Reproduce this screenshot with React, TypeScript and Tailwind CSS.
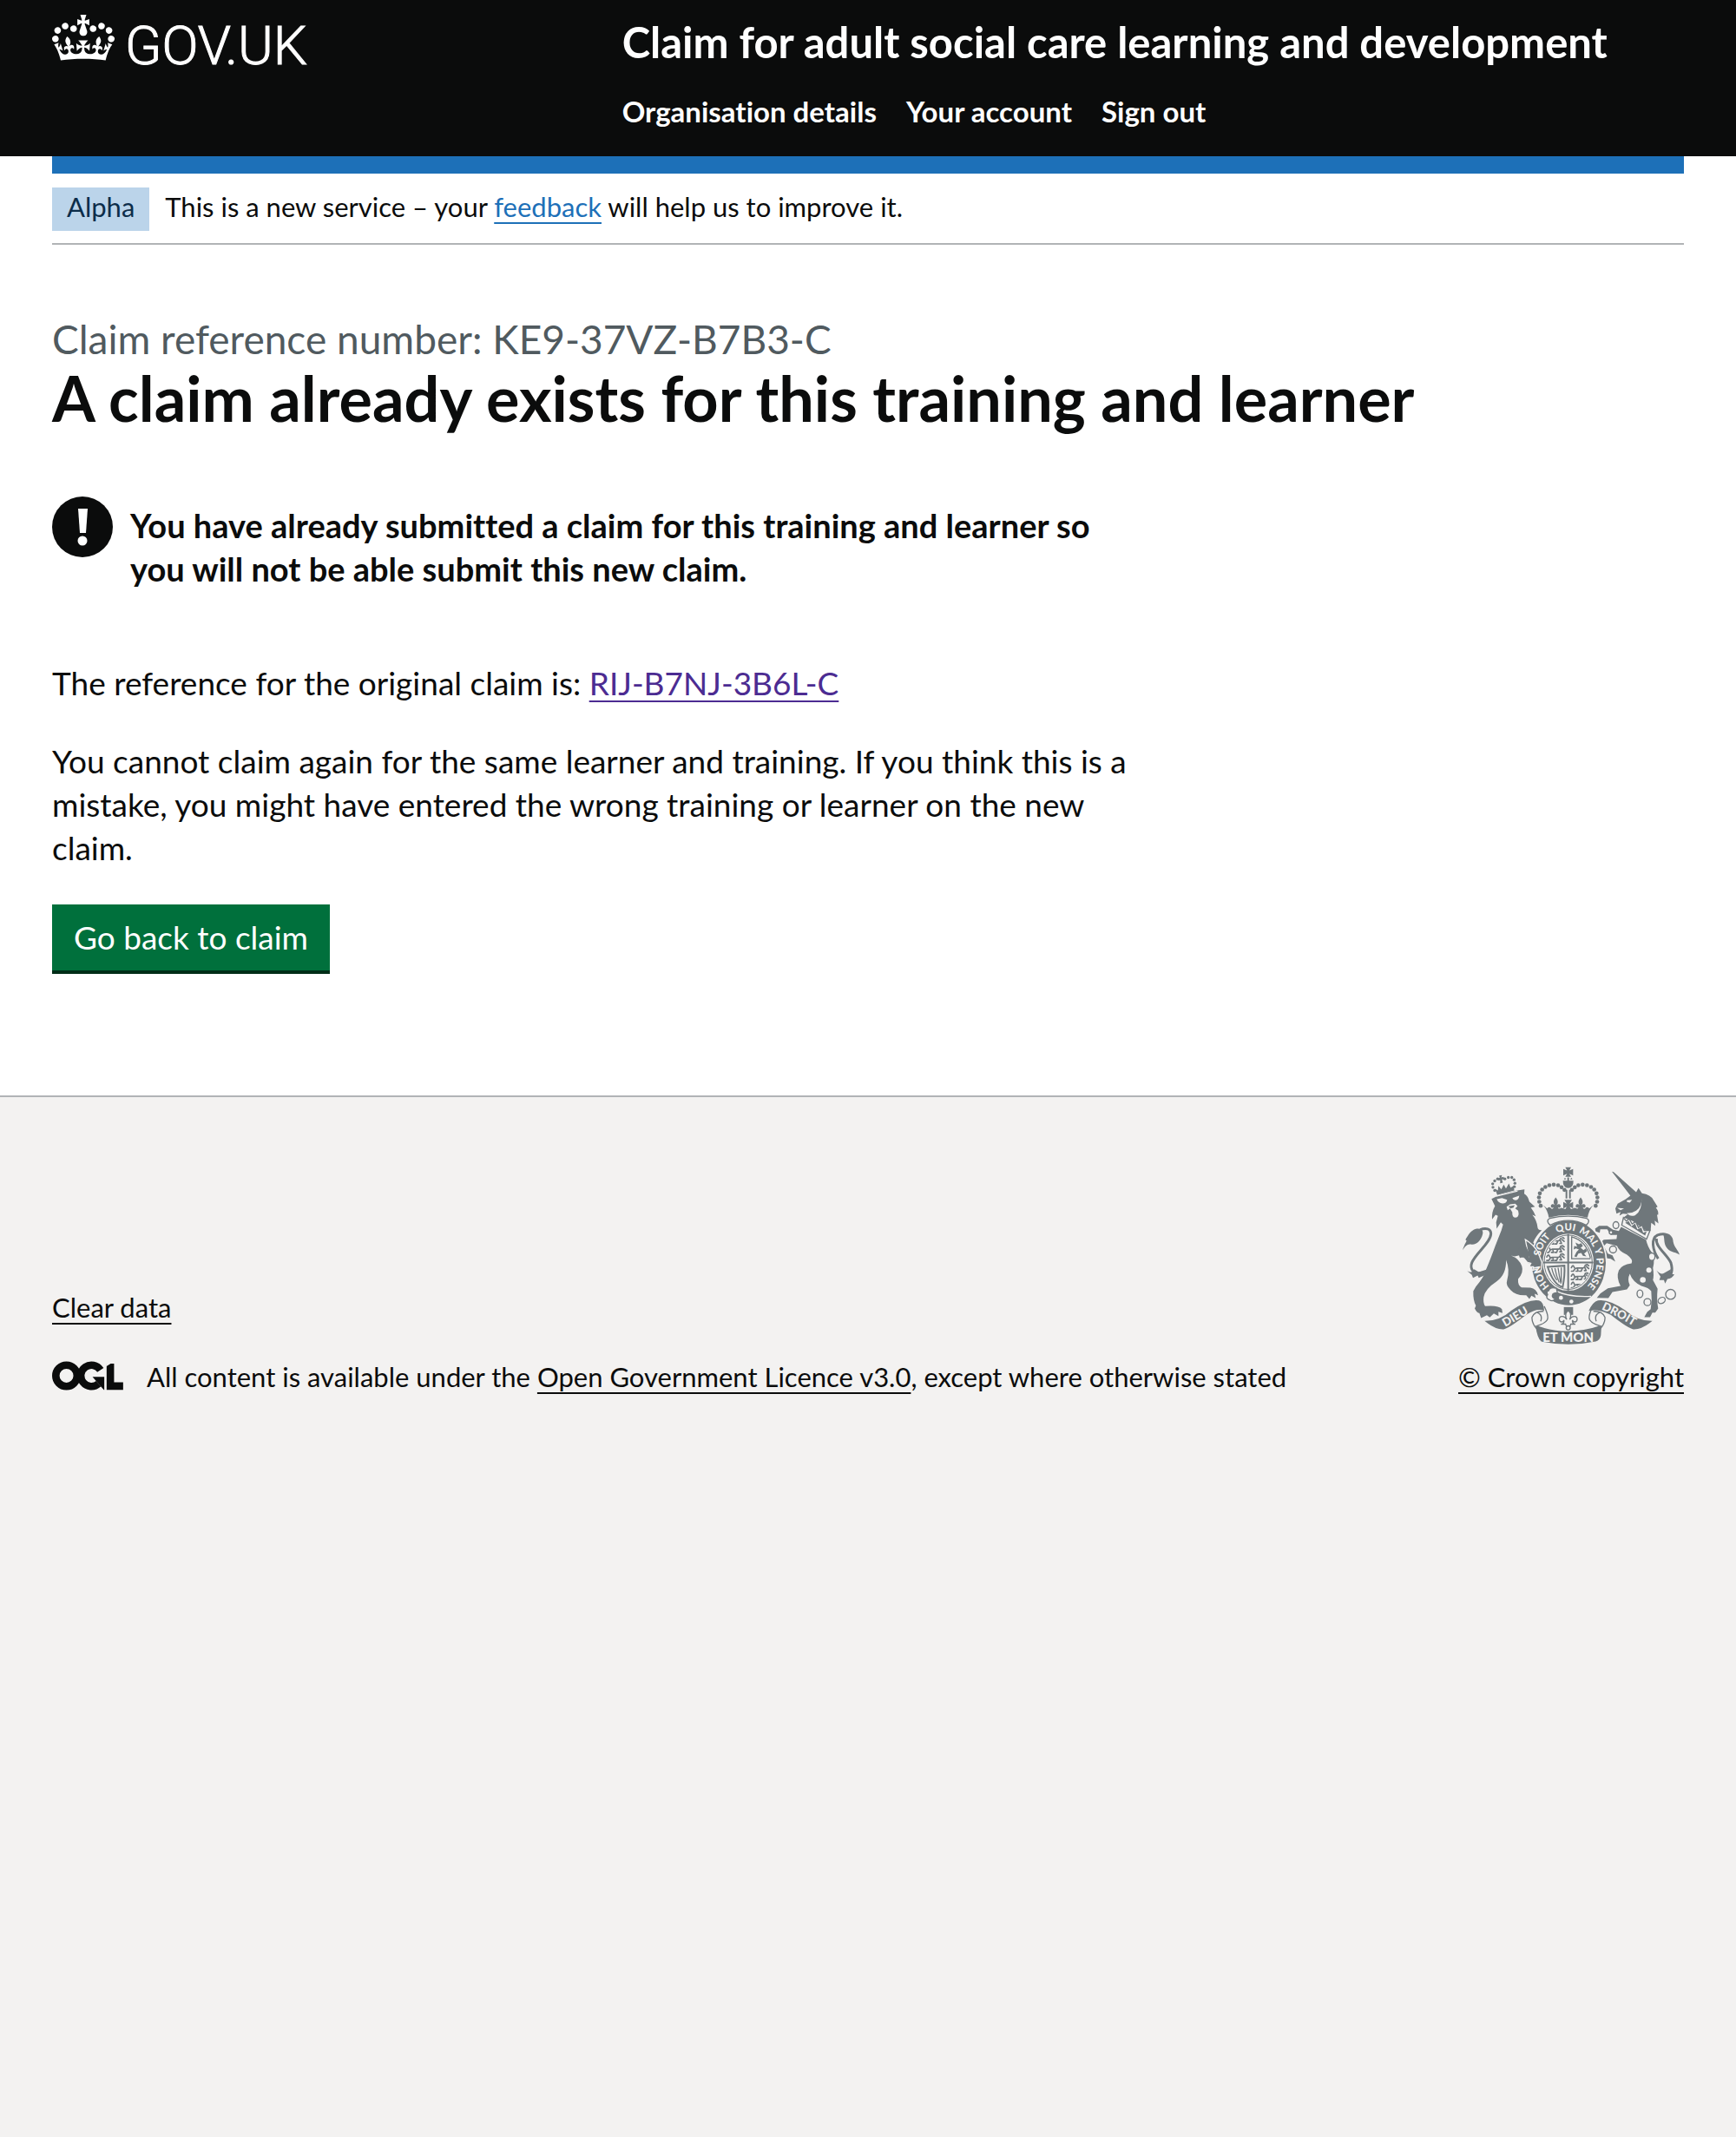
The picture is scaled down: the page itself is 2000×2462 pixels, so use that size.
import React from 'react';

const LINK =
  'underline decoration-2 underline-offset-[6px] [text-decoration-skip-ink:none]';

function Crown() {
  return (
    <svg aria-hidden="true" viewBox="0 0 132 97" className="mt-px h-[53px] w-[72px] shrink-0" fill="currentColor">
      <path d="M25 30.2c3.5 1.5 7.7-.2 9.1-3.7 1.5-3.6-.2-7.8-3.9-9.2-3.6-1.4-7.6.3-9.1 3.9-1.4 3.5.3 7.5 3.9 9zM9 39.5c3.6 1.5 7.8-.2 9.2-3.7 1.5-3.6-.2-7.8-3.9-9.1-3.6-1.5-7.6.2-9.1 3.8-1.4 3.5.3 7.5 3.8 9zM4.4 57.2c3.5 1.5 7.7-.2 9.1-3.8 1.5-3.6-.2-7.7-3.9-9.1-3.5-1.5-7.6.3-9.1 3.8-1.4 3.5.3 7.6 3.9 9.1zm38.3-21.4c3.5 1.5 7.7-.2 9.1-3.8 1.5-3.6-.2-7.7-3.9-9.1-3.6-1.5-7.6.3-9.1 3.8-1.3 3.6.4 7.7 3.9 9.1zm64.4-5.6c-3.6 1.5-7.8-.2-9.1-3.7-1.5-3.6.2-7.8 3.8-9.2 3.6-1.4 7.7.3 9.2 3.9 1.3 3.5-.4 7.5-3.9 9zm15.9 9.3c-3.6 1.5-7.7-.2-9.1-3.7-1.5-3.6.2-7.8 3.7-9.1 3.6-1.5 7.7.2 9.2 3.8 1.5 3.5-.3 7.5-3.8 9zm4.7 17.7c-3.6 1.5-7.8-.2-9.2-3.8-1.5-3.6.2-7.7 3.9-9.1 3.6-1.5 7.7.3 9.2 3.8 1.3 3.5-.4 7.6-3.9 9.1zM89.3 35.8c-3.6 1.5-7.8-.2-9.2-3.8-1.4-3.6.2-7.7 3.9-9.1 3.6-1.5 7.7.3 9.2 3.8 1.4 3.6-.3 7.7-3.9 9.1zM69.7 17.7l8.9 4.7V9.3l-8.9 2.8c-.2-.3-.5-.6-.9-.9L72.4 0H59.6l3.5 11.2c-.3.3-.6.5-.9.9l-8.8-2.8v13.1l8.8-4.7c.3.3.6.7.9.9l-5 15.4v.1c-.2.8-.4 1.6-.4 2.4 0 4.1 3.1 7.5 7 8.1h.2c.3 0 .7.1 1 .1.4 0 .7 0 1-.1h.2c4-.6 7.1-4.1 7.1-8.1 0-.8-.1-1.7-.4-2.4V34l-5.1-15.4c.4-.2.7-.6 1-.9zM66 92.8c16.9 0 32.8 1.1 47.1 3.2 4-16.9 8.9-26.7 14-33.5l-9.6-3.4c1 4.9 1.1 7.2 0 10.2-1.5-1.4-3-4.3-4.2-8.7L108.6 76c2.8-2 5-3.2 7.5-3.3-4.4 9.4-10 11.9-13.6 11.2-4.3-.8-6.3-4.6-5.6-7.9 1-4.7 5.7-5.9 8-.5 4.3-8.7-3-11.4-7.6-8.8 7.1-7.2 7.9-13.5 2.1-21.1-8 6.1-8.1 12.3-4.5 20.8-4.7-5.4-12.1-2.5-9.5 6.2 3.4-5.2 7.9-2 7.2 3.1-.6 4.3-6.4 7.8-13.5 7.2-10.3-.9-10.9-8-11.2-13.8 2.5-.5 7.1 1.8 11 7.3L80.2 60c-4.1 4.4-8 5.3-12.3 5.4 1.4-4.4 8-11.6 8-11.6H55.5s6.4 7.2 7.9 11.6c-4.2-.1-8-1-12.3-5.4l1.4 16.4c3.9-5.5 8.5-7.7 10.9-7.3-.3 5.8-.9 12.8-11.1 13.8-7.2.6-12.9-2.9-13.5-7.2-.7-5 3.8-8.3 7.1-3.1 2.7-8.7-4.6-11.6-9.4-6.2 3.7-8.5 3.6-14.7-4.6-20.8-5.8 7.6-5 13.9 2.2 21.1-4.7-2.6-11.9.1-7.7 8.8 2.3-5.5 7.1-4.2 8.1.5.7 3.3-1.3 7.1-5.7 7.9-3.5.7-9-1.8-13.5-11.2 2.5.1 4.7 1.3 7.5 3.3l-4.7-15.4c-1.2 4.4-2.7 7.2-4.3 8.7-1.1-3-.9-5.3 0-10.2l-9.5 3.4c5 6.9 9.9 16.7 14 33.5 14.8-2.1 30.8-3.2 47.7-3.2z" />
    </svg>
  );
}

function LicenceLogo() {
  return (
    <svg role="img" aria-label="Open Government Licence" viewBox="0 0 484 196" className="mt-0.5 h-[34px] w-[82px] shrink-0" fill="none" stroke="currentColor" strokeWidth="50.7">
      <circle cx="97.8" cy="97.8" r="72.4" />
      <path d="M329 59A72.4 72.4 0 1 0 316 152" />
      <path d="M275 105.8h80v87.8h-3l-36-41-18-20z" fill="currentColor" stroke="none" />
      <path d="M396.2 16V168.2H483.2" />
      <path d="M366 -4h40l16 4-54 34z" fill="#f3f2f1" stroke="none" />
    </svg>
  );
}

/* Supporters, garter and motto ribbons of the royal arms. */
const INK = '#6f777b';
const PAPER = '#f3f2f1';

const CROWN_DOTS: [number, number][] = [
  [342, 205], [337, 191], [336, 176], [339, 162], [347, 149], [358, 140], [372, 134], [387, 132], [402, 134], [414, 141], [424, 150],
];
const LION_CROWN_DOTS: [number, number][] = [
  [183, 152], [177, 141], [176, 129], [183, 119], [193, 112], [218, 112], [230, 107], [242, 107], [250, 115], [253, 127], [251, 139],
];
const GARTER_WORDS: [string, number][] = [
  ['HON', 112], ['SOIT', 222], ['QUI', 318], ['MAL', 400], ['Y', 455], ['PENSE', 528],
];

function PassantLions({ x, y }: { x: number; y: number }) {
  return (
    <g fill="none" stroke={INK} strokeWidth="5" strokeLinejoin="round" strokeLinecap="round">
      {[0, 29, 57].map((dy) => (
        <g key={dy}>
          <path d={`M${x} ${y + dy + 5}q5 -12 9 -3q4 9 10 4h22q6 -2 7 -10l7 -2 5 4`} />
          <path d={`M${x + 12} ${y + dy + 9}l-5 8h-7M${x + 21} ${y + dy + 8}l2 9h-7M${x + 38} ${y + dy + 7}l-4 10h-6M${x + 46} ${y + dy + 3}l5 12h-6M${x + 52} ${y + dy + 1}l8 7`} />
        </g>
      ))}
    </g>
  );
}

function FleurDeLis({ x, y }: { x: number; y: number }) {
  return (
    <path
      transform={`translate(${x} ${y})`}
      fill={INK}
      d="M0 -18C-10 -6 -8 2 -3 9C-8 4 -15 4 -17 11C-17 17 -12 20 -8 16C-8 22 -14 24 -18 22L-14 34H14L18 22C14 24 8 22 8 16C12 20 17 17 17 11C15 4 8 4 3 9C8 2 10 -6 0 -18Z"
    />
  );
}

function RoyalArms() {
  return (
    <svg aria-hidden="true" viewBox="72 70 750 614" className="h-[205px] w-[250px]" fill={INK}>
      {/* lion's tail */}
      <path d="M140 436C112 446 96 424 104 402C116 370 168 334 170 302C170 284 152 280 132 288" fill="none" stroke={INK} strokeWidth="9" />
      <path d="M72 358C78 340 84 330 86 326L82 322C92 306 100 290 118 285C134 281 146 290 141 304C136 324 120 342 100 338C88 336 80 346 72 358Z" />
      <path d="M88 430C100 436 108 436 112 424L128 434L158 424L146 446L128 454L124 446L108 454L104 444Z" />
      {/* lion */}
      <path d="M172 181L190 172Q236 154 286 148L285 163Q298 170 303 191L322 208L308 211Q318 224 325 241L313 236Q328 254 331 278Q331 290 346 289Q324 310 316 332Q334 346 343 372L348 400L346 424L330 432L332 422L316 428L321 414L306 416L312 404L299 403L307 392L297 378L284 386L286 374L270 386L268 376L252 380L240 377Q268 388 277 414Q284 436 264 458Q262 480 276 487L306 488Q328 492 333 514L321 509L325 524L310 516L303 527L292 514Q256 516 238 496Q220 480 226 462Q236 424 222 392Q224 442 190 466Q150 492 145 520Q142 540 150 552Q196 548 208 562L210 576L196 571L196 586L180 577L166 591L156 583L136 593L130 576Q122 576 114 560L118 550Q108 532 109 500L118 484Q146 452 152 428Q172 380 184 346L206 290L212 270L204 262L190 284L188 262L194 240L186 236L174 252Q172 226 184 206Z" />
      <path d="M190 182L208 178L226 184Q224 197 210 197Q196 196 190 182ZM244 178L268 170Q266 186 254 186Q248 186 244 178Z" fill={PAPER} />
      <path d="M224 208L236 200L254 198L262 206L254 214L264 222Q270 244 256 246Q242 246 244 228L236 214L228 220Z" fill={PAPER} />
      <path d="M230 207L252 203L248 211L238 214Z" />
      {/* lion's crown */}
      {LION_CROWN_DOTS.map(([x, y]) => (
        <circle key={`${x}-${y}`} cx={x} cy={y} r="5" />
      ))}
      <path d="M198 101L208 99L206 107L214 105L216 114L208 114L211 125L202 127L202 116L196 118L194 109L201 108Z" />
      <path d="M184 146L194 152L196 136L206 148L214 132L222 145L232 128L238 142L248 136L251 152L192 168Z" />
      <path d="M188 172L262 154" stroke={PAPER} strokeWidth="4" />
      {/* unicorn's tail */}
      <path d="M748 388C728 356 722 318 746 306C764 300 776 304 780 308M742 318C738 348 778 372 792 402C800 430 794 446 776 452" fill="none" stroke={INK} strokeWidth="9" />
      <path d="M764 300C790 298 800 314 800 330C804 350 816 356 822 374C802 362 788 368 776 348C766 332 772 318 764 300Z" />
      <path d="M742 428C752 440 762 442 768 438L792 424L790 440L804 442Q796 456 780 458L772 474L768 462L752 462L756 450Z" />
      {/* unicorn's head and mane */}
      <path d="M588 87L594 88L672 158L680 144L692 162Q722 166 732 186L746 208L740 212Q750 222 748 236L744 236L749 266L736 256L738 274L724 264L722 290L700 288L660 258L628 246L644 234L626 232L614 239L618 226L604 232L600 214L608 198L636 182L652 170Z" />
      <path d="M690 176Q694 206 672 222Q656 232 640 230Q650 244 668 238Q694 222 690 176ZM640 186L658 184L650 194L640 192ZM606 212L630 214L618 220Z" fill={PAPER} />
      {/* coronet collar */}
      <path d="M628 246L638 258L648 250L658 268L670 260L680 280L692 272L700 290L720 290L708 320L622 272Z" fill={PAPER} stroke={INK} strokeWidth="4" />
      <path d="M634 264L646 258L656 276L668 266L676 286L690 280L696 298L708 294L703 308Z" />
      {/* unicorn's body */}
      <path d="M620 278L706 322Q712 348 726 366Q738 392 730 420Q734 446 730 462L746 492Q742 530 748 560L738 574L728 574L720 590L700 590L710 572L722 562Q728 530 724 500Q716 488 690 482Q660 468 650 440Q640 460 650 480L640 494L590 503L576 524L536 523L548 508L574 490L618 482Q602 452 612 428Q622 408 656 404Q664 392 640 374Q612 362 606 344L570 334L560 344L574 370L590 376L600 398L584 388L568 386L552 356L544 336L560 322L604 320L606 306L584 306L572 286L548 286L546 298L532 294L530 284L544 274L572 274L592 288L612 292Z" />
      <g fill={PAPER}>
        <circle cx="716" cy="427" r="9" />
        <circle cx="695" cy="461" r="10" />
      </g>
      <g fill={PAPER} stroke={INK} strokeWidth="4">
        <ellipse cx="602" cy="272" rx="10" ry="12" />
        <circle cx="585" cy="297" r="6" />
        <circle cx="592" cy="356" r="12" />
        <ellipse cx="726" cy="381" rx="11" ry="13" />
        <ellipse cx="685" cy="509" rx="10" ry="13" />
        <circle cx="711" cy="538" r="12" />
        <ellipse cx="760" cy="532" rx="13" ry="10" transform="rotate(-30 760 532)" />
        <circle cx="791" cy="511" r="17" />
      </g>
      {/* garter */}
      <ellipse cx="439" cy="402" rx="133" ry="152" fill={PAPER} />
      <ellipse cx="439" cy="402" rx="128" ry="147" />
      {/* lion's forearm, laid over the garter */}
      <path d="M289 322Q316 338 332 364L346 400L344 426L330 434L328 424L314 428L317 416L302 416L308 404L294 400L300 380Z" stroke={PAPER} strokeWidth="4" />
      <path d="M284 330L304 372L298 400L284 384L270 384L262 360Z" />
      <ellipse cx="437" cy="400" rx="88" ry="99" fill={PAPER} />
      <ellipse cx="437" cy="400" rx="83" ry="94" fill="none" stroke={INK} strokeWidth="3" />
      <path id="garter-line" d="M437 510A98 110 0 0 1 437 290A98 110 0 0 1 437 510" fill="none" />
      <g fill={PAPER} fontFamily="Lato, sans-serif" fontWeight="900" fontSize="34" textAnchor="middle">
        {GARTER_WORDS.map(([word, offset]) => (
          <text key={word}>
            <textPath href="#garter-line" startOffset={offset}>{word}</textPath>
          </text>
        ))}
      </g>
      {/* quartered shield */}
      <clipPath id="shield">
        <ellipse cx="437" cy="400" rx="79" ry="90" />
      </clipPath>
      <path d="M434 302H440V498H434ZM350 398H524V404H350Z" />
      <path d="M420 498H454L462 506H412Z" />
      <g clipPath="url(#shield)">
        <PassantLions x={363} y={320} />
        <PassantLions x={448} y={414} />
      </g>
      <path d="M449 310V388H514M449 312Q500 326 514 386" fill="none" stroke={INK} strokeWidth="4" />
      <path d="M462 332L474 338L482 334L488 344L480 350L490 358L498 352L502 362L492 370L500 380L488 378L482 368L472 370L466 382L458 380L466 364L474 356L464 352L456 356L458 344L468 346Z" />
      <path d="M366 416L424 412Q426 446 418 486Q386 478 366 416Z" fill="none" stroke={INK} strokeWidth="6" />
      <path d="M380 420Q386 446 398 462M391 420Q396 448 406 470M402 419Q406 448 412 474M413 418V470" fill="none" stroke={INK} strokeWidth="4" />
      {/* strap and buckle */}
      <path d="M392 498Q440 522 516 518" fill="none" stroke={PAPER} strokeWidth="4" />
      <circle cx="412" cy="523" r="7" fill={PAPER} />
      <circle cx="448" cy="536" r="7" fill={PAPER} />
      <path d="M396 490Q374 484 370 498Q360 500 366 512Q358 526 372 530Q384 538 392 526Q378 522 384 510Q390 504 400 506Z" fill={PAPER} stroke={INK} strokeWidth="4" />
      {/* imperial crown */}
      {CROWN_DOTS.map(([x, y]) => (
        <g key={`${x}-${y}`}>
          <circle cx={x} cy={y} r="7" />
          <circle cx={874 - x} cy={y} r="7" />
        </g>
      ))}
      <path d="M427 72H447L441 83L454 78V100L441 94L447 105H427L433 94L420 100V78L433 83Z" />
      <path d="M434 107H440V118H455Q456 142 437 144Q418 142 419 118H434ZM426 108L430 114H422ZM448 108L444 114H452Z" />
      <path d="M428 150H434V180H428ZM440 150H446V180H440Z" />
      <FleurDeLis x={394} y={194} />
      <FleurDeLis x={480} y={194} />
      <path d="M424 184H450L442 198L454 192V214L442 208L450 222H424L432 208L420 214V192L432 198Z" />
      <path d="M350 202L364 214Q372 206 378 214L390 222L414 212L437 220L460 212L484 222L496 214Q502 206 510 214L524 202Q508 220 504 246Q437 228 370 246Q366 220 350 202Z" />
      <path d="M374 248Q437 234 500 248Q512 254 506 264L500 272Q437 240 374 272L368 264Q362 254 374 248Z" fill={PAPER} stroke={INK} strokeWidth="4" />
      {/* ribbons */}
      <path d="M148 603Q200 604 242 566Q300 526 336 532Q352 536 354 568Q330 556 292 582Q236 626 214 632Q186 634 148 603Z" />
      <path d="M728 603Q676 604 634 566Q576 526 540 532Q522 536 508 568Q540 560 584 582Q640 626 662 632Q690 634 728 603Z" />
      <path d="M354 552Q372 588 364 600Q356 612 330 620M352 570Q322 568 312 590Q310 610 328 630M522 552Q504 588 512 600Q520 612 546 620M524 570Q554 568 564 590Q566 610 548 630M330 574Q350 582 342 604M546 574Q526 582 534 604" fill="none" stroke={INK} strokeWidth="4" />
      <path d="M324 618Q437 658 552 618L550 652Q548 668 532 674Q437 694 344 674Q330 664 324 618Z" />
      <path id="ribbon-left" d="M212 628Q252 606 326 560" fill="none" />
      <path id="ribbon-right" d="M546 560Q620 592 676 630" fill="none" />
      <g fill={PAPER} fontFamily="Lato, sans-serif" fontWeight="900" textAnchor="middle">
        <text fontSize="40"><textPath href="#ribbon-left" startOffset="56">DIEU</textPath></text>
        <text fontSize="40"><textPath href="#ribbon-right" startOffset="68">DROIT</textPath></text>
        <text fontSize="45" x="437" y="675">ET MON</text>
      </g>
      {/* badge between the ribbons */}
      <path d="M422 555H454V582H422Z" />
      <path d="M437 566C424 578 428 590 432 598C424 584 406 584 406 598C408 610 420 608 422 600C424 610 418 614 412 614H428L431 622H443L446 614H462C456 614 450 610 452 600C454 608 466 610 468 598C468 584 450 584 442 598C446 590 450 578 437 566Z" fill={PAPER} stroke={INK} strokeWidth="4" />
      <circle cx="437" cy="627" r="7" fill={PAPER} stroke={INK} strokeWidth="4" />
    </svg>
  );
}

export default function App() {
  return (
    <div className="flex min-h-screen flex-col bg-white font-[Lato,sans-serif] text-[#0b0c0c] [font-variant-ligatures:none]">
      <header className="bg-[#0b0c0c] px-[60px] text-white">
        <div className="flex items-start pt-4 pb-8">
          <div className="w-1/3 shrink-0">
            <a href="#" className="inline-flex items-start gap-3">
              <Crown />
              <span className="font-[Roboto,sans-serif] text-[62px] leading-[74px] font-light [-webkit-text-stroke:1px_white]">GOV.UK</span>
            </a>
          </div>
          <div className="flex-1 pl-[30px]">
            <a href="#" className="block text-[49px] leading-[64px] font-bold">
              Claim for adult social care learning and development
            </a>
            <nav aria-label="Menu" className="mt-7">
              <ul className="flex flex-wrap gap-x-[34px] text-[33px] leading-10 font-bold">
                <li><a href="#">Organisation details</a></li>
                <li><a href="#">Your account</a></li>
                <li><a href="#">Sign out</a></li>
              </ul>
            </nav>
          </div>
        </div>
      </header>

      <div className="px-[60px]">
        <div className="h-5 bg-[#1d70b8]" />
        <div className="flex items-start gap-[18px] border-b-2 border-[#b1b4b6] pt-4 pb-3.5 text-[31px] leading-[44px]">
          <strong className="bg-[#bbd4ea] px-[17px] pb-1.5 font-normal text-[#0c2d4a]">Alpha</strong>
          <span>
            This is a new service – your{' '}
            <a href="#" className={`${LINK} text-[#1d70b8]`}>feedback</a> will help us to improve it.
          </span>
        </div>

        <main className="pt-[82px]">
          <span className="block text-[46px] leading-[54px] text-[#505a5f]">
            Claim reference number: KE9-37VZ-B7B3-C
          </span>
          <h1 className="text-7xl leading-[80px] font-bold">A claim already exists for this training and learner</h1>

          <div className="w-2/3 text-[37px] leading-[50px]">
            <div className="mt-[74px] flex items-start gap-5">
              <svg aria-hidden="true" viewBox="0 0 70 70" className="size-[70px] shrink-0">
                <circle cx="35" cy="35" r="35" fill="#0b0c0c" />
                <path d="M30 14H41L39 42H32Z" fill="#fff" />
                <circle cx="35" cy="51" r="5.5" fill="#fff" />
              </svg>
              <strong className="pt-2 text-[38px] font-bold">
                You have already submitted a claim for this training and learner so
                <br />
                you will not be able submit this new claim.
              </strong>
            </div>
            <p className="mt-[82px]">
              The reference for the original claim is:{' '}
              <a href="#" className={`${LINK} text-[#4c2c92]`}>RIJ-B7NJ-3B6L-C</a>
            </p>
            <p className="mt-10">
              You cannot claim again for the same learner and training. If you think this is a
              <br />
              mistake, you might have entered the wrong training or learner on the new
              <br />
              claim.
            </p>
            <button type="button" className="mt-10 block bg-[#00703c] px-[25px] py-[13px] text-white shadow-[0_4px_0_#002d18]">
              Go back to claim
            </button>
          </div>
        </main>
      </div>

      <footer className="mt-36 flex-1 border-t-2 border-[#b1b4b6] bg-[#f3f2f1] px-[60px] pt-20 text-[31px] leading-10">
        <div className="flex items-end justify-between">
          <div className="flex flex-col gap-10">
            <div>
              <a href="#" className={LINK}>Clear data</a>
            </div>
            <div className="flex items-start gap-[27px]">
              <LicenceLogo />
              <span>
                All content is available under the{' '}
                <a href="#" className={LINK}>Open Government Licence v3.0</a>, except where otherwise stated
              </span>
            </div>
          </div>
          <a href="#" className={`${LINK} flex flex-col items-center gap-[17px]`}>
            <RoyalArms />
            <span>© Crown copyright</span>
          </a>
        </div>
      </footer>
    </div>
  );
}
